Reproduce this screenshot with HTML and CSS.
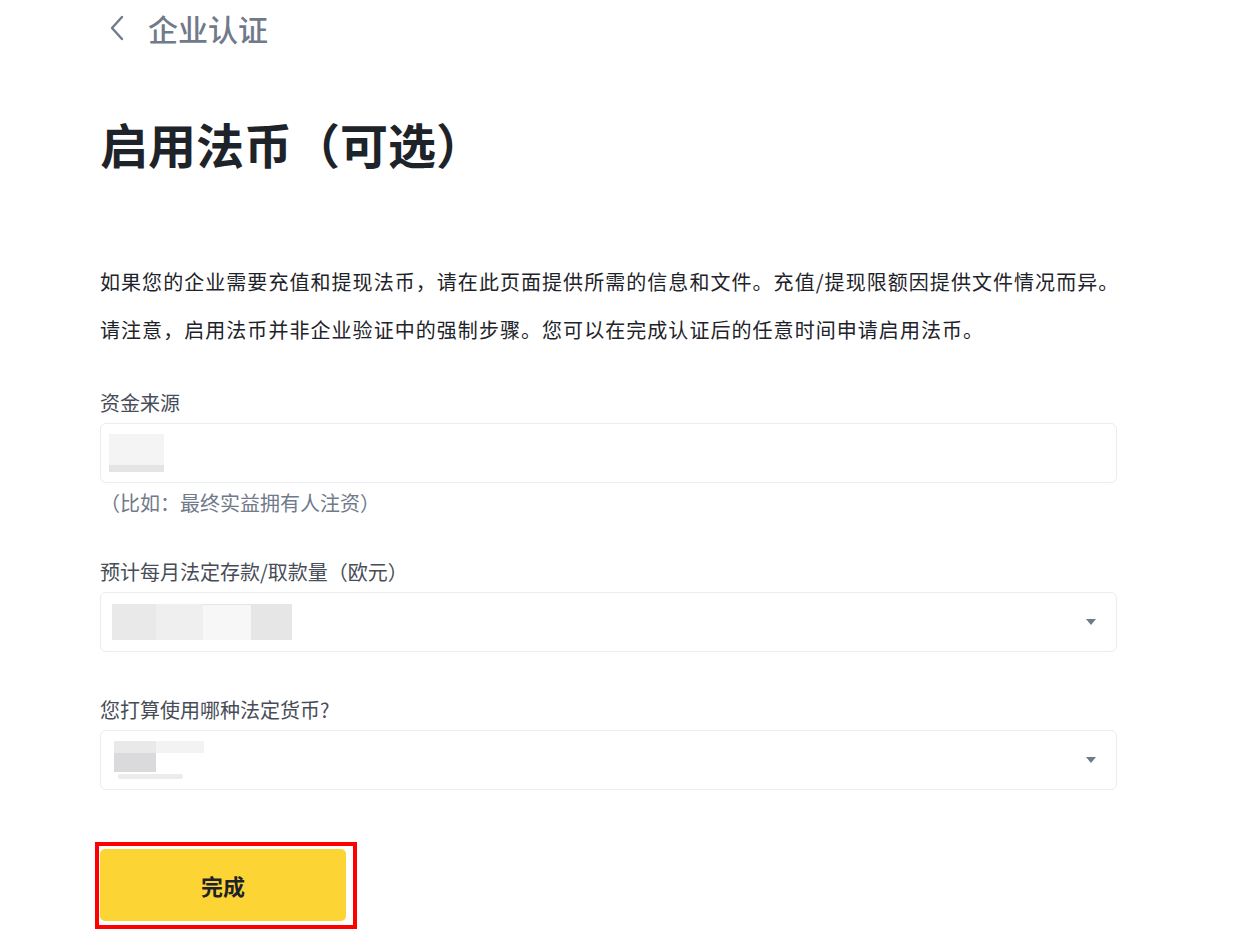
FILE: index.html
```html
<!DOCTYPE html>
<html lang="zh-CN">
<head>
<meta charset="utf-8">
<title>企业认证</title>
<link rel="stylesheet" href="styles.css">
</head>
<body>
<div class="page">
  <div class="topbar">
    <svg class="back" width="16" height="26" viewBox="0 0 16 26"><path d="M13 2 L3 13 L13 24" fill="none" stroke="#707a8a" stroke-width="2.4" stroke-linecap="round" stroke-linejoin="round"/></svg>
    <span class="topbar-title">企业认证</span>
  </div>

  <h1 class="title">启用法币（可选）</h1>

  <p class="desc">如果您的企业需要充值和提现法币，请在此页面提供所需的信息和文件。充值/提现限额因提供文件情况而异。</p>
  <p class="desc">请注意，启用法币并非企业验证中的强制步骤。您可以在完成认证后的任意时间申请启用法币。</p>

  <div class="field field-first">
    <div class="label">资金来源</div>
    <div class="box">
      <div class="blur blur-a">
        <div class="blur-a-top"></div>
        <div class="blur-a-bottom"></div>
      </div>
    </div>
    <div class="hint">（比如：最终实益拥有人注资）</div>
  </div>

  <div class="field field-second">
    <div class="label">预计每月法定存款/取款量（欧元）</div>
    <div class="box select">
      <div class="blur blur-b">
        <span class="b1"></span><span class="b2"></span><span class="b3"></span><span class="b4"></span>
      </div>
      <span class="caret"></span>
    </div>
  </div>

  <div class="field field-third">
    <div class="label">您打算使用哪种法定货币?</div>
    <div class="box select">
      <div class="blur blur-c">
        <div class="c-row1"><span class="c1"></span><span class="c2"></span></div>
        <div class="c-row2"></div>
        <div class="c-row3"></div>
      </div>
      <span class="caret"></span>
    </div>
  </div>

  <div class="action">
    <button class="submit">完成</button>
    <div class="highlight"></div>
  </div>
</div>
</body>
</html>
```

FILE: styles.css
```css
* { box-sizing: border-box; }

html, body { background: #ffffff; }

body {
  margin: 0;
  font-family: "Noto Sans CJK SC", "Noto Sans", "Liberation Sans", sans-serif;
  color: #1e2329;
}

.page {
  padding-left: 100px;
  padding-bottom: 25px;
  width: 1117px;
}

.topbar {
  height: 56px;
  display: flex;
  align-items: center;
  padding-left: 9px;
  gap: 23px;
}

.back { display: block; }

.topbar-title {
  font-size: 30px;
  font-weight: 500;
  color: #707a8a;
  line-height: 40px;
}

.title {
  margin: 59px 0 0 0;
  font-size: 48px;
  line-height: 56px;
  font-weight: 700;
  color: #1e2329;
}

.desc {
  margin: 0;
  font-size: 20px;
  line-height: 48px;
  color: #1e2329;
  letter-spacing: 1.05px;
  white-space: nowrap;
}

.desc:first-of-type { margin-top: 87px; }

.field { display: flex; flex-direction: column; }
.field-first { margin-top: 35px; }
.field-second { margin-top: 41px; }
.field-third { margin-top: 44px; }

.label {
  font-size: 20px;
  line-height: 28px;
  color: #474d57;
  margin-bottom: 6px;
}

.box {
  height: 60px;
  border: 1px solid #eaecef;
  border-radius: 6px;
  display: flex;
  align-items: center;
  position: relative;
}

.hint {
  margin-top: 6px;
  font-size: 20px;
  line-height: 28px;
  color: #707a8a;
}

/* blurred placeholder content */
.blur-a {
  margin-left: 8px;
  width: 55px;
  height: 38px;
  display: flex;
  flex-direction: column;
}
.blur-a-top { flex: 1; background: #f4f4f4; }
.blur-a-bottom { height: 7px; background: #e4e4e4; }

.blur-b {
  margin-left: 11px;
  display: flex;
  height: 36px;
}
.blur-b span { display: block; height: 100%; }
.b1 { width: 44px; background: #e9e9e9; }
.b2 { width: 47px; background: #efefef; }
.b3 { width: 48px; background: #f7f7f7; border-top: 1px solid #e4e4e4; }
.b4 { width: 41px; background: #e6e6e6; }

.blur-c {
  margin-left: 13px;
  width: 92px;
  height: 38px;
  display: flex;
  flex-direction: column;
}
.c-row1 { display: flex; height: 12px; }
.c1 { width: 42px; background: #e9e9e9; }
.c2 { width: 48px; background: #f3f3f3; }
.c-row2 { width: 42px; height: 19px; background: #dadadc; }
.c-row3 { margin-left: 4px; width: 65px; height: 5px; background: #ececec; border-radius: 2px; margin-top: 2px; }

.caret {
  position: absolute;
  right: 20px;
  top: 50%;
  margin-top: -3px;
  width: 0;
  height: 0;
  border-left: 5px solid transparent;
  border-right: 5px solid transparent;
  border-top: 6px solid #707a8a;
}

.action {
  margin-top: 59px;
  position: relative;
  width: 246px;
}

.submit {
  display: block;
  width: 246px;
  height: 72px;
  border: none;
  border-radius: 5px;
  background: #fcd535;
  font-family: "Noto Sans CJK SC", "Noto Sans", sans-serif;
  font-size: 22px;
  font-weight: 700;
  color: #1e2329;
  padding: 0;
}

.highlight {
  position: absolute;
  left: -5px;
  top: -7px;
  width: 262px;
  height: 87px;
  border: 4px solid #ff0000;
}
```
